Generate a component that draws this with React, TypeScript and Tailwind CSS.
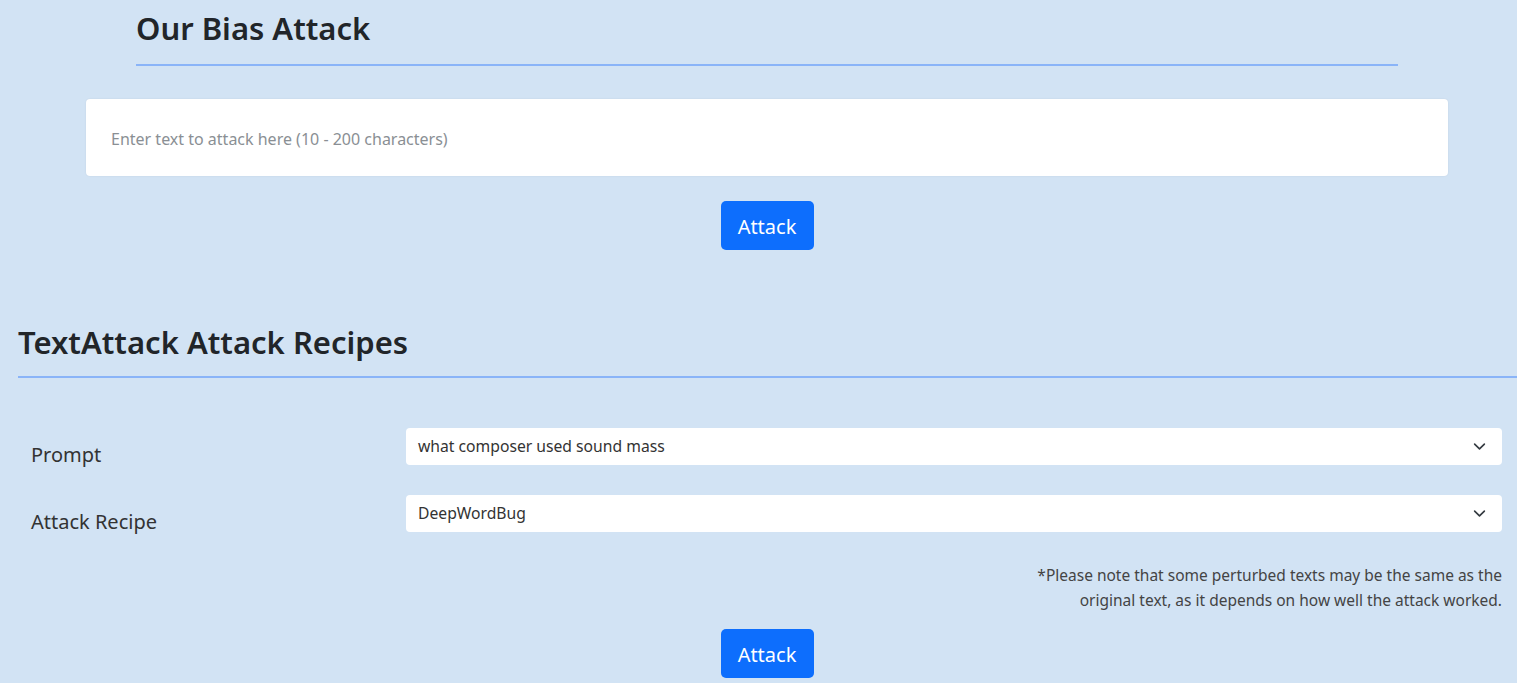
import React from "react";

function Chevron() {
  return (
    <svg width="13" height="13" viewBox="0 0 16 16" className="shrink-0">
      <path d="m2 5 6 6 6-6" fill="none" stroke="#343a40" strokeWidth="2" strokeLinecap="round" strokeLinejoin="round" />
    </svg>
  );
}

function Select({ value }: { value: string }) {
  return (
    <div className="flex h-[37px] flex-1 items-center justify-between rounded-[4px] bg-white pl-[12px] pr-[16px] text-[15.7px] text-[#333]">
      <span>{value}</span>
      <Chevron />
    </div>
  );
}

function Row({ label, value }: { label: string; value: string }) {
  return (
    <div className="flex h-[37px] items-start">
      <label className="h-[37px] w-[375px] pt-[12px] text-[20px] leading-[30px] text-[#333]">{label}</label>
      <Select value={value} />
    </div>
  );
}

export default function App() {
  return (
    <div className="min-h-screen w-full overflow-hidden bg-[#d2e3f4] font-['Noto_Sans',sans-serif] text-[#212529]">
      <section className="pl-[17px]">
        <div className="mx-auto w-[1262px] pt-[8px]">
          <h2 className="text-[31px] font-semibold leading-[40px]">Our Bias Attack</h2>
          <div className="mt-[16px] h-[2px] bg-[#8ab4f8]" />
        </div>
        <div className="mx-auto mt-[33px] flex h-[77px] w-[1362px] items-center rounded-[4px] bg-white px-[25px] shadow-[0_0_2px_rgba(0,0,0,0.08)]">
          <input
            className="w-full bg-transparent pt-[3px] text-[16px] text-[#333] outline-none placeholder:text-[#8a8f94]"
            placeholder="Enter text to attack here (10 - 200 characters)"
          />
        </div>
        <div className="mt-[25px] flex justify-center">
          <button className="h-[49px] w-[93px] rounded-[5px] bg-[#0d6efd] pt-[3px] text-[20px] text-white">Attack</button>
        </div>
      </section>

      <section className="mt-[72px]">
        <div className="pl-[18px]">
          <h2 className="text-[31px] font-semibold leading-[40px]">TextAttack Attack Recipes</h2>
          <div className="mt-[14px] h-[2px] bg-[#8ab4f8]" />
        </div>
        <div className="mt-[50px] flex flex-col gap-[30px] pl-[31px] pr-[15px]">
          <Row label="Prompt" value="what composer used sound mass" />
          <Row label="Attack Recipe" value="DeepWordBug" />
        </div>
        <p className="mt-[31px] pr-[15px] text-right text-[15.5px] leading-[25px] text-[#444]">
          *Please note that some perturbed texts may be the same as the
          <br />
          original text, as it depends on how well the attack worked.
        </p>
        <div className="mt-[16px] flex justify-center pl-[17px]">
          <button className="h-[49px] w-[93px] rounded-[5px] bg-[#0d6efd] pt-[3px] text-[20px] text-white">Attack</button>
        </div>
      </section>
    </div>
  );
}
